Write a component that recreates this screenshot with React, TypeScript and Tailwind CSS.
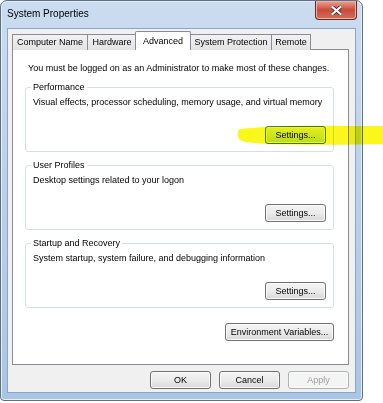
import React from 'react'

const FONT = { fontFamily: '"Liberation Sans", Arial, sans-serif' }

function Btn({
  label,
  w = 'w-[61px]',
  focus = false,
  disabled = false,
}: {
  label: string
  w?: string
  focus?: boolean
  disabled?: boolean
}) {
  return (
    <div
      className={[
        'h-[18px] rounded-[3px] border flex items-center justify-center text-[9px] leading-none shadow-[inset_0_0_0_1px_#fbfbfb]',
        w,
        focus
          ? 'border-[#3c7fb1] bg-gradient-to-b from-[#eaf6fd] to-[#bde4fb] text-black'
          : disabled
            ? 'border-[#adb2b5] bg-[#f4f4f4] text-[#a0a0a0]'
            : 'border-[#707070] bg-gradient-to-b from-[#f4f4f4] via-[#ebebeb] to-[#d8d8d8] text-black',
      ].join(' ')}
    >
      {label}
    </div>
  )
}

function Group({
  title,
  text,
  focus = false,
}: {
  title: string
  text: string
  focus?: boolean
}) {
  return (
    <fieldset className="border border-[#d5dfe5] rounded-[3px] px-[7px] pb-[7px]">
      <legend className="px-[2px] ml-[-2px] text-[9px] leading-[12px] text-black">{title}</legend>
      <div className="text-[9px] leading-[11px] text-black mt-[4px]">{text}</div>
      <div className="flex justify-end mt-[18px]">
        <Btn label="Settings..." focus={focus} />
      </div>
    </fieldset>
  )
}

const TABS = [
  { label: 'Computer Name', w: 'w-[75px]' },
  { label: 'Hardware', w: 'w-[49px]' },
  { label: 'Advanced', w: 'w-[56px]' },
  { label: 'System Protection', w: 'w-[81px]' },
  { label: 'Remote', w: 'w-[40px]' },
]

export default function App() {
  return (
    <div className="w-[383px] h-[403px] bg-white relative overflow-hidden" style={FONT}>
      <div className="w-[363px] h-[401px] rounded-t-[7px] rounded-b-[4px] border border-[#5e6f86] bg-gradient-to-b from-[#cbdcf0] via-[#b9d0ea] to-[#a9c5e6] flex flex-col shadow-[inset_0_0_0_1px_#e4eef9]">
        {/* title bar */}
        <div className="h-[27px] flex items-start justify-between pl-[6px] pr-[5px] shrink-0">
          <div className="text-[10px] text-black mt-[5px]">System Properties</div>
          <div className="w-[42px] h-[19px] rounded-b-[4px] border border-t-0 border-[#6e2a20] bg-gradient-to-b from-[#e8a394] via-[#c8493a] to-[#d36f5d] flex items-center justify-center shadow-[inset_0_0_0_1px_#eab1a5]">
            <svg width="11" height="9" viewBox="0 0 11 9">
              <path d="M1.5 1 L9.5 8 M9.5 1 L1.5 8" stroke="#3e1510" strokeWidth="3.6" strokeLinecap="square" />
              <path d="M1.5 1 L9.5 8 M9.5 1 L1.5 8" stroke="#ffffff" strokeWidth="2.2" strokeLinecap="square" />
            </svg>
          </div>
        </div>

        {/* client area */}
        <div className="mx-[6px] flex-1 mb-[7px] bg-[#f0f0f0] border border-[#8ea5c2] flex flex-col pt-[2px]">
          <div className="flex items-end pl-[4px] h-[19px] relative z-10">
            {TABS.map((t) =>
              t.label === 'Advanced' ? (
                <div
                  key={t.label}
                  className={`${t.w} h-[19px] -mx-[1px] bg-white border border-b-0 border-[#898c95] rounded-t-[2px] text-[9px] text-black flex justify-center items-start pt-[3px] relative z-10`}
                >
                  {t.label}
                </div>
              ) : (
                <div
                  key={t.label}
                  className={`${t.w} h-[16px] bg-gradient-to-b from-[#f2f2f2] to-[#e3e3e3] border border-b-0 border-r-0 last:border-r border-[#898c95] text-[9px] text-black flex justify-center items-center`}
                >
                  {t.label}
                </div>
              ),
            )}
          </div>
          <div className="ml-[4px] w-[337px] h-[316px] -mt-[1px] bg-white border border-[#898c95] flex flex-col px-[12px] pt-[13px]">
            <div className="text-[9px] leading-[11px] text-black pl-[3px]">
              You must be logged on as an Administrator to make most of these changes.
            </div>
            <div className="mt-[7px] flex flex-col gap-[7px] pr-[2px]">
              <Group
                title="Performance"
                text="Visual effects, processor scheduling, memory usage, and virtual memory"
                focus
              />
              <Group title="User Profiles" text="Desktop settings related to your logon" />
              <Group title="Startup and Recovery" text="System startup, system failure, and debugging information" />
            </div>
            <div className="flex justify-end mt-[15px] pr-[2px]">
              <Btn label="Environment Variables..." w="w-[109px]" />
            </div>
          </div>
          <div className="flex justify-end gap-[8px] pr-[6px] mt-[6px]">
            <Btn label="OK" />
            <Btn label="Cancel" />
            <Btn label="Apply" disabled />
          </div>
        </div>
      </div>

      {/* yellow marker stroke */}
      <svg
        className="absolute left-[236px] top-[121px] mix-blend-multiply pointer-events-none"
        width="147"
        height="28"
        viewBox="0 0 147 28"
      >
        <path
          d="M4 8 C30 5 70 4 110 5 L147 5 L147 23 C110 24 70 24 30 23 C15 22 6 21 3 18 C1 14 1 10 4 8 Z"
          fill="#fbf71c"
        />
      </svg>
    </div>
  )
}
